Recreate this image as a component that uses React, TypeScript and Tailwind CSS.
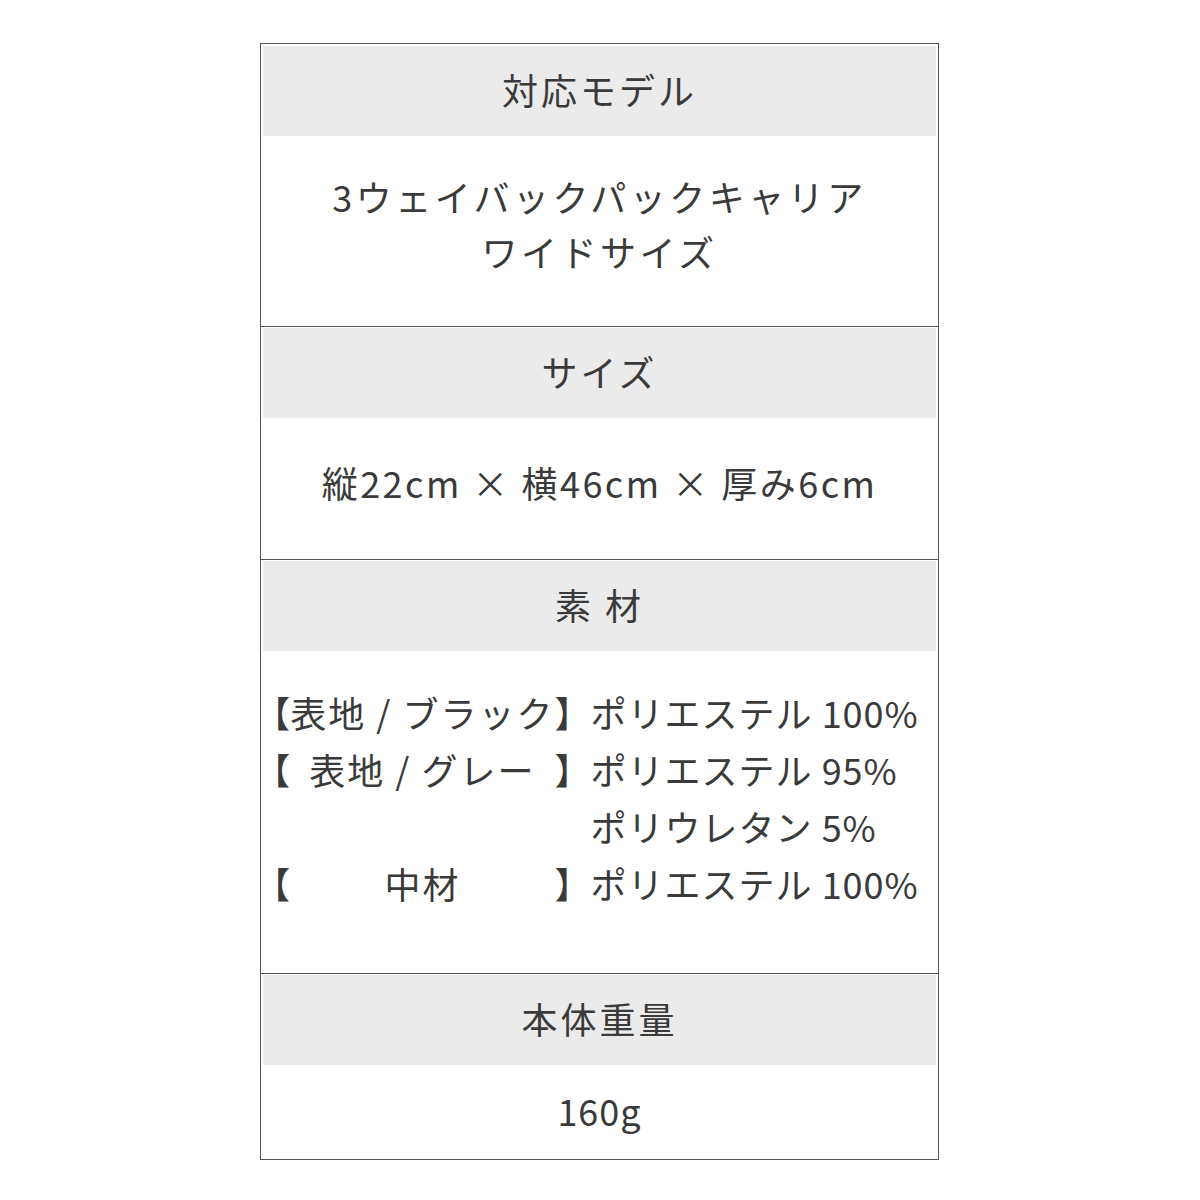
const FONT = "font-['Noto_Sans_CJK_JP','Noto_Sans',sans-serif]"

const MATERIALS = [
    { label: '表地 / ブラック', value: 'ポリエステル 100%' },
    { label: '表地 / グレー', value: 'ポリエステル 95%' },
    { label: '', value: 'ポリウレタン 5%' },
    { label: '中材', value: 'ポリエステル 100%' },
]

function Header({ children }: { children: React.ReactNode }) {
    return (
        <div className="flex h-[90px] items-center justify-center bg-[#ebebeb] pb-[5px]">
            <span className="tracking-[3px]">{children}</span>
        </div>
    )
}

export default function App() {
    return (
        <div className={`min-h-[1200px] bg-white pt-[43px] text-[36px] leading-none text-[#3a3a3a] ${FONT}`}>
            <div className="ml-[260px] w-[679px] border border-[#555] px-[2px] pt-[2px]">
                {/* 対応モデル */}
                <Header>対応モデル</Header>
                <div className="flex h-[190px] flex-col items-center justify-center gap-[19px] pb-[16px] tracking-[3.5px]">
                    <span>3ウェイバックパックキャリア</span>
                    <span>ワイドサイズ</span>
                </div>

                {/* サイズ */}
                <div className="-mx-[2px] border-t border-[#555] px-[2px] pt-[1px]">
                    <Header>サイズ</Header>
                    <div className="flex h-[141px] items-center justify-center pb-[14px] tracking-[2.5px]">
                        縦22cm × 横46cm × 厚み6cm
                    </div>
                </div>

                {/* 素材 */}
                <div className="-mx-[2px] border-t border-[#555] px-[2px] pt-[1px]">
                    <Header>素 材</Header>
                    <div className="flex h-[322px] items-center justify-center pb-[30px] pr-[26px]">
                        <div className="grid grid-cols-[auto_auto] whitespace-nowrap">
                            {MATERIALS.map((m, i) => (
                                <div key={i} className="contents">
                                    <div className="flex h-[57px] items-center justify-between">
                                        {i !== 2 ? (
                                            <>
                                                <span>【</span>
                                                <span className="tracking-[2px]">{m.label}</span>
                                                <span>】</span>
                                            </>
                                        ) : null}
                                    </div>
                                    <div className="flex h-[57px] items-center tracking-[1px]">{m.value}</div>
                                </div>
                            ))}
                        </div>
                    </div>
                </div>

                {/* 本体重量 */}
                <div className="-mx-[2px] border-t border-[#555] px-[2px] pt-[1px]">
                    <Header>本体重量</Header>
                    <div className="flex h-[94px] items-center justify-center pb-[4px] tracking-[1px]">
                        160g
                    </div>
                </div>
            </div>
        </div>
    )
}
